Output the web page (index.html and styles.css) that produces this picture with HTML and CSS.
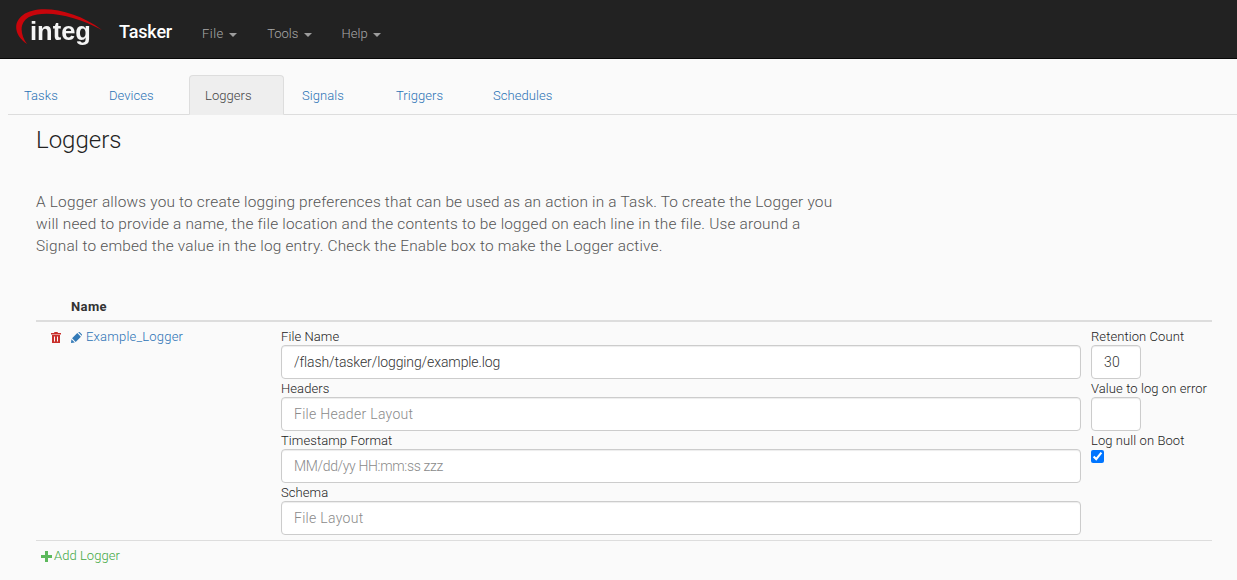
FILE: index.html
```html
<!DOCTYPE html>
<html lang="en">
<head>
<meta charset="utf-8">
<title>Tasker - Loggers</title>
<link rel="stylesheet" href="styles.css">
</head>
<body>
<nav class="navbar">
  <a class="logo" href="#">
    <svg class="logo-arc" width="110" height="50" viewBox="0 0 110 50"><path d="M27 44C15 36 12 23 23 15C38 4 74 9 102 30C76 16 46 9 29 17C19 23 20 34 27 44Z" fill="#c8050b"/></svg>
    <span class="logo-text">integ</span>
  </a>
  <a class="brand" href="#">Tasker</a>
  <ul class="menu">
    <li><a href="#">File <span class="caret"></span></a></li>
    <li><a href="#">Tools <span class="caret"></span></a></li>
    <li><a href="#">Help <span class="caret"></span></a></li>
  </ul>
</nav>
<ul class="tabs">
  <li><a href="#">Tasks</a></li>
  <li><a href="#">Devices</a></li>
  <li class="active"><a href="#">Loggers</a></li>
  <li><a href="#">Signals</a></li>
  <li><a href="#">Triggers</a></li>
  <li><a href="#">Schedules</a></li>
</ul>
<main class="content">
  <h2 class="title">Loggers</h2>
  <p class="lead">A Logger allows you to create logging preferences that can be used as an action in a Task. To create the Logger you will need to provide a name, the file location and the contents to be logged on each line in the file. Use around a Signal to embed the value in the log entry. Check the Enable box to make the Logger active.</p>
  <div class="table-head">Name</div>
  <div class="row">
    <div class="row-name">
      <svg class="icon-trash" width="10" height="11" viewBox="0 0 10 11"><path d="M3.5 0H6.5L7 1H10V2.5H0V1H3ZM1 3H9V11H1ZM3 4.5V9.5H4V4.5ZM6 4.5V9.5H7V4.5Z" fill="#c9302c" fill-rule="evenodd"/></svg>
      <svg class="icon-pencil" width="11" height="11" viewBox="0 0 11 11"><path d="M0 11L.4 7.2L3.8 10.6ZM1.1 6.3L6.3 1.1L9.9 4.7L4.7 9.9ZM7.2.3Q8 -.2 8.8 .2L10.8 2.2Q11.2 3 10.7 3.8Z" fill="#337ab7"/></svg>
      <a href="#">Example_Logger</a>
    </div>
    <div class="fields">
      <label class="field">File Name<input class="has-value" type="text" value="/flash/tasker/logging/example.log"></label>
      <label class="field">Headers<input type="text" placeholder="File Header Layout"></label>
      <label class="field">Timestamp Format<input class="tight" type="text" placeholder="MM/dd/yy HH:mm:ss zzz"></label>
      <label class="field">Schema<input type="text" placeholder="File Layout"></label>
    </div>
    <div class="side">
      <label class="field">Retention Count<input type="text" value="30"></label>
      <label class="field">Value to log on error<input type="text"></label>
      <label class="field">Log null on Boot<input class="check" type="checkbox" checked></label>
    </div>
  </div>
  <a class="add" href="#"><svg width="11" height="11" viewBox="0 0 11 11"><path d="M4 0H7V4H11V7H7V11H4V7H0V4H4Z" fill="#5cb85c"/></svg>Add Logger</a>
</main>
</body>
</html>
```

FILE: styles.css
```css
* { box-sizing: border-box; }
html, body { height: 100%; }
body {
  margin: 0;
  background: #fafafa;
  color: #222;
  font-family: Roboto, "Liberation Sans", sans-serif;
  font-size: 13px;
  font-weight: 300;
  line-height: 18px;
  overflow: hidden;
}
a { text-decoration: none; color: #2a72b5; }
ul { list-style: none; margin: 0; padding: 0; }

.navbar {
  display: flex;
  align-items: flex-start;
  height: 59px;
  background: #222;
  border-bottom: 1px solid #080808;
}
.logo { position: relative; display: block; width: 119px; height: 58px; }
.logo-arc { position: absolute; left: 0; top: 0; filter: blur(.5px); }
.logo-text {
  position: absolute;
  left: 30px;
  top: 11px;
  color: #f4f4f4;
  font-family: "Liberation Sans", sans-serif;
  font-weight: 700;
  font-size: 25.5px;
  line-height: 40px;
  filter: blur(.5px);
}
.brand { color: #fff; font-size: 18px; font-weight: 500; line-height: 20px; margin: 22px 15px 0 0; letter-spacing: -.15px; }
.menu { display: flex; margin-top: 24px; }
.menu a { display: block; padding: 0 15px; color: #aaa; line-height: 20px; }
.menu li:first-child a { letter-spacing: .4px; }
.caret {
  display: inline-block;
  width: 0;
  height: 0;
  margin-left: 2px;
  vertical-align: middle;
  border-top: 4px solid #9d9d9d;
  border-left: 4px solid transparent;
  border-right: 4px solid transparent;
}

.tabs {
  display: grid;
  grid-template-columns: 83px 94px 95px 92px 95px auto;
  column-gap: 2px;
  margin: 16px 0 0 8px;
  height: 40px;
  border-bottom: 1px solid #ddd;
}
.tabs a {
  display: block;
  height: 40px;
  padding: 11px 0 11px 15px;
  border: 1px solid transparent;
  border-radius: 4px 4px 0 0;
  letter-spacing: .05px;
}
.tabs .active a {
  color: #444;
  background: #eee;
  border-color: #ddd;
  border-bottom-color: #eee;
}

.content { padding: 0 25px 0 36px; }
.title { margin: 11px 0 0; font-size: 24px; font-weight: 300; line-height: 28px; color: #222; }
.lead {
  margin: 37px 0 0;
  width: 805px;
  font-size: 15.4px;
  font-weight: 300;
  line-height: 22px;
  letter-spacing: .2px;
  color: #555;
}
.table-head {
  margin-top: 34px;
  height: 31px;
  padding: 7px 0 0 35px;
  border-bottom: 2px solid #ddd;
  font-weight: 700;
  letter-spacing: .4px;
  color: #333;
}
.row {
  display: flex;
  height: 219px;
  padding-top: 6px;
  border-bottom: 1px solid #ddd;
}
.row-name {
  display: flex;
  align-items: flex-start;
  width: 245px;
  padding-left: 15px;
  letter-spacing: .2px;
}
.row-name a { line-height: 18px; }
.icon-trash { margin-top: 4px; margin-right: 10px; flex: none; }
.icon-pencil { margin-top: 4px; margin-right: 4px; flex: none; }
.fields { width: 800px; margin-right: 10px; }
.side { flex: 1; }
.field { display: block; height: 52px; letter-spacing: .08px; line-height: 17px; white-space: nowrap; }
.field input[type="text"] {
  display: block;
  width: 100%;
  height: 34px;
  padding: 6px 12px;
  background: #fff;
  border: 1px solid #ccc;
  border-radius: 4px;
  font: 300 14px/20px Roboto, "Liberation Sans", sans-serif;
  color: #333;
  letter-spacing: .3px;
  box-shadow: inset 0 1px 1px rgba(0,0,0,.075);
}
.field input.has-value { letter-spacing: -.1px; }
.field input.tight { letter-spacing: -.35px; }
.field input::placeholder { color: #8a8a8a; opacity: 1; }
.side .field input[type="text"] { width: 50px; }
.check { display: block; width: 13px; height: 13px; margin: 1px 0 0; }
.add {
  display: flex;
  align-items: center;
  margin: 6px 0 0 5px;
  color: #43a843;
  letter-spacing: .05px;
}
.add svg { margin-right: 2px; }
```
